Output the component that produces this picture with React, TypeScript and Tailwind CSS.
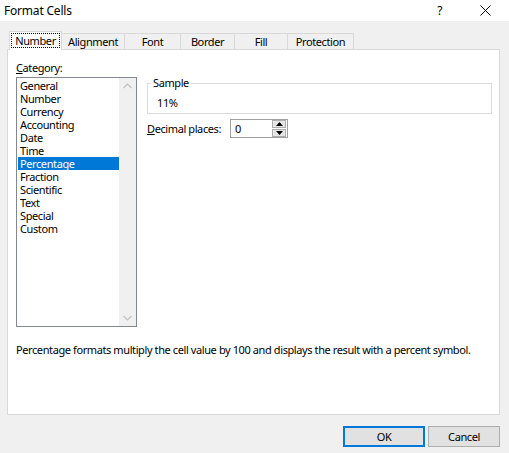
import React from "react";

const items = [
  "General",
  "Number",
  "Currency",
  "Accounting",
  "Date",
  "Time",
  "Percentage",
  "Fraction",
  "Scientific",
  "Text",
  "Special",
  "Custom",
];

const tabs = [
  { label: "Alignment", w: "w-[63px]" },
  { label: "Font", w: "w-[56px]" },
  { label: "Border", w: "w-[54px]" },
  { label: "Fill", w: "w-[53px]" },
  { label: "Protection", w: "w-[66px]" },
];

export default function App() {
  return (
    <div
      className="w-[509px] h-[453px] bg-[#f0f0f0] text-black text-[11px] leading-[13px] tracking-[-0.4px] overflow-hidden whitespace-nowrap"
      style={{ fontFamily: '"Noto Sans", "Open Sans", sans-serif' }}
    >
      {/* Title bar */}
      <div className="h-[21px] bg-white flex items-center pl-[4px]">
        <span className="text-[12px] leading-[14px] tracking-[-0.2px]">Format Cells</span>
        <span className="ml-auto text-[12px] leading-[14px] mr-[38px]">?</span>
        <svg width="11" height="11" viewBox="0 0 11 11" className="mr-[18px]">
          <path d="M0.5 0.5 L10.5 10.5 M10.5 0.5 L0.5 10.5" stroke="#000" strokeWidth="1" />
        </svg>
      </div>

      {/* Tabs */}
      <div className="pl-[9px] pt-[10px] flex items-end h-[29px] relative z-10">
        <div className="w-[53px] h-[19px] bg-white border-l border-t border-r border-[#d9d9d9] flex items-start justify-center pt-[1px]">
          <span className="border border-dotted border-black px-[3px] leading-[13px]">Number</span>
        </div>
        {tabs.map((t) => (
          <div
            key={t.label}
            className={`${t.w} h-[16px] mb-[1px] bg-[#f0f0f0] border-t border-r border-[#d9d9d9] flex items-center justify-center`}
          >
            {t.label}
          </div>
        ))}
      </div>

      {/* Panel */}
      <div className="ml-[7px] -mt-[1px] w-[493px] h-[366px] bg-white border border-[#d9d9d9] pl-[8px]">
        <div className="flex">
          {/* Left column */}
          <div className="pt-[11px]">
            <div className="h-[14px] leading-[14px]">
              <span className="underline underline-offset-[1px]">C</span>ategory:
            </div>
            <div className="mt-[2px] w-[121px] h-[250px] border border-[#828790] flex">
              <div className="w-[102px] pt-[1px] pl-[1px]">
                {items.map((it) => (
                  <div
                    key={it}
                    className={`h-[13px] leading-[13px] pl-[2px] ${
                      it === "Percentage" ? "bg-[#0078d7] text-white" : ""
                    }`}
                  >
                    {it}
                  </div>
                ))}
              </div>
              <div className="w-[17px] bg-[#f0f0f0] flex flex-col justify-between items-center py-[5px]">
                <svg width="9" height="6" viewBox="0 0 9 6">
                  <path d="M0.5 5 L4.5 1 L8.5 5" stroke="#c0c0c0" strokeWidth="1.2" fill="none" />
                </svg>
                <svg width="9" height="6" viewBox="0 0 9 6">
                  <path d="M0.5 1 L4.5 5 L8.5 1" stroke="#c0c0c0" strokeWidth="1.2" fill="none" />
                </svg>
              </div>
            </div>
          </div>

          {/* Right column */}
          <div className="ml-[10px] pt-[33px]">
            <div className="relative w-[345px] h-[31px] border border-[#dcdcdc] pl-[9px] pt-[12px]">
              <span className="absolute -top-[8px] left-[3px] bg-white px-[2px] leading-[14px]">Sample</span>
              <span className="leading-[14px]">11%</span>
            </div>
            <div className="mt-[5px] flex items-center">
              <div className="w-[83px]">
                <span className="underline underline-offset-[1px]">D</span>ecimal places:
              </div>
              <div className="w-[58px] h-[19px] border border-[#a0a0a0] flex items-center">
                <span className="pl-[4px]">0</span>
                <div className="ml-auto mr-[1px] w-[14px] h-[17px] flex flex-col gap-[1px]">
                  <div className="h-[8px] bg-[#e6e6e6] border border-[#adadad] flex items-center justify-center">
                    <svg width="7" height="4" viewBox="0 0 7 4">
                      <path d="M0 4 L3.5 0 L7 4 Z" fill="#000" />
                    </svg>
                  </div>
                  <div className="h-[8px] bg-[#e6e6e6] border border-[#adadad] flex items-center justify-center">
                    <svg width="7" height="4" viewBox="0 0 7 4">
                      <path d="M0 0 L3.5 4 L7 0 Z" fill="#000" />
                    </svg>
                  </div>
                </div>
              </div>
            </div>
          </div>
        </div>

        <div className="mt-[16px] leading-[14px]">
          Percentage formats multiply the cell value by 100 and displays the result with a percent symbol.
        </div>
      </div>

      {/* Buttons */}
      <div className="flex justify-end pr-[9px] mt-[11px] gap-[3px]">
        <button className="w-[82px] h-[21px] bg-[#e1e1e1] border-2 border-[#0078d7] flex items-center justify-center">
          OK
        </button>
        <button className="w-[72px] h-[21px] bg-[#e1e1e1] border border-[#adadad] flex items-center justify-center">
          Cancel
        </button>
      </div>
    </div>
  );
}
